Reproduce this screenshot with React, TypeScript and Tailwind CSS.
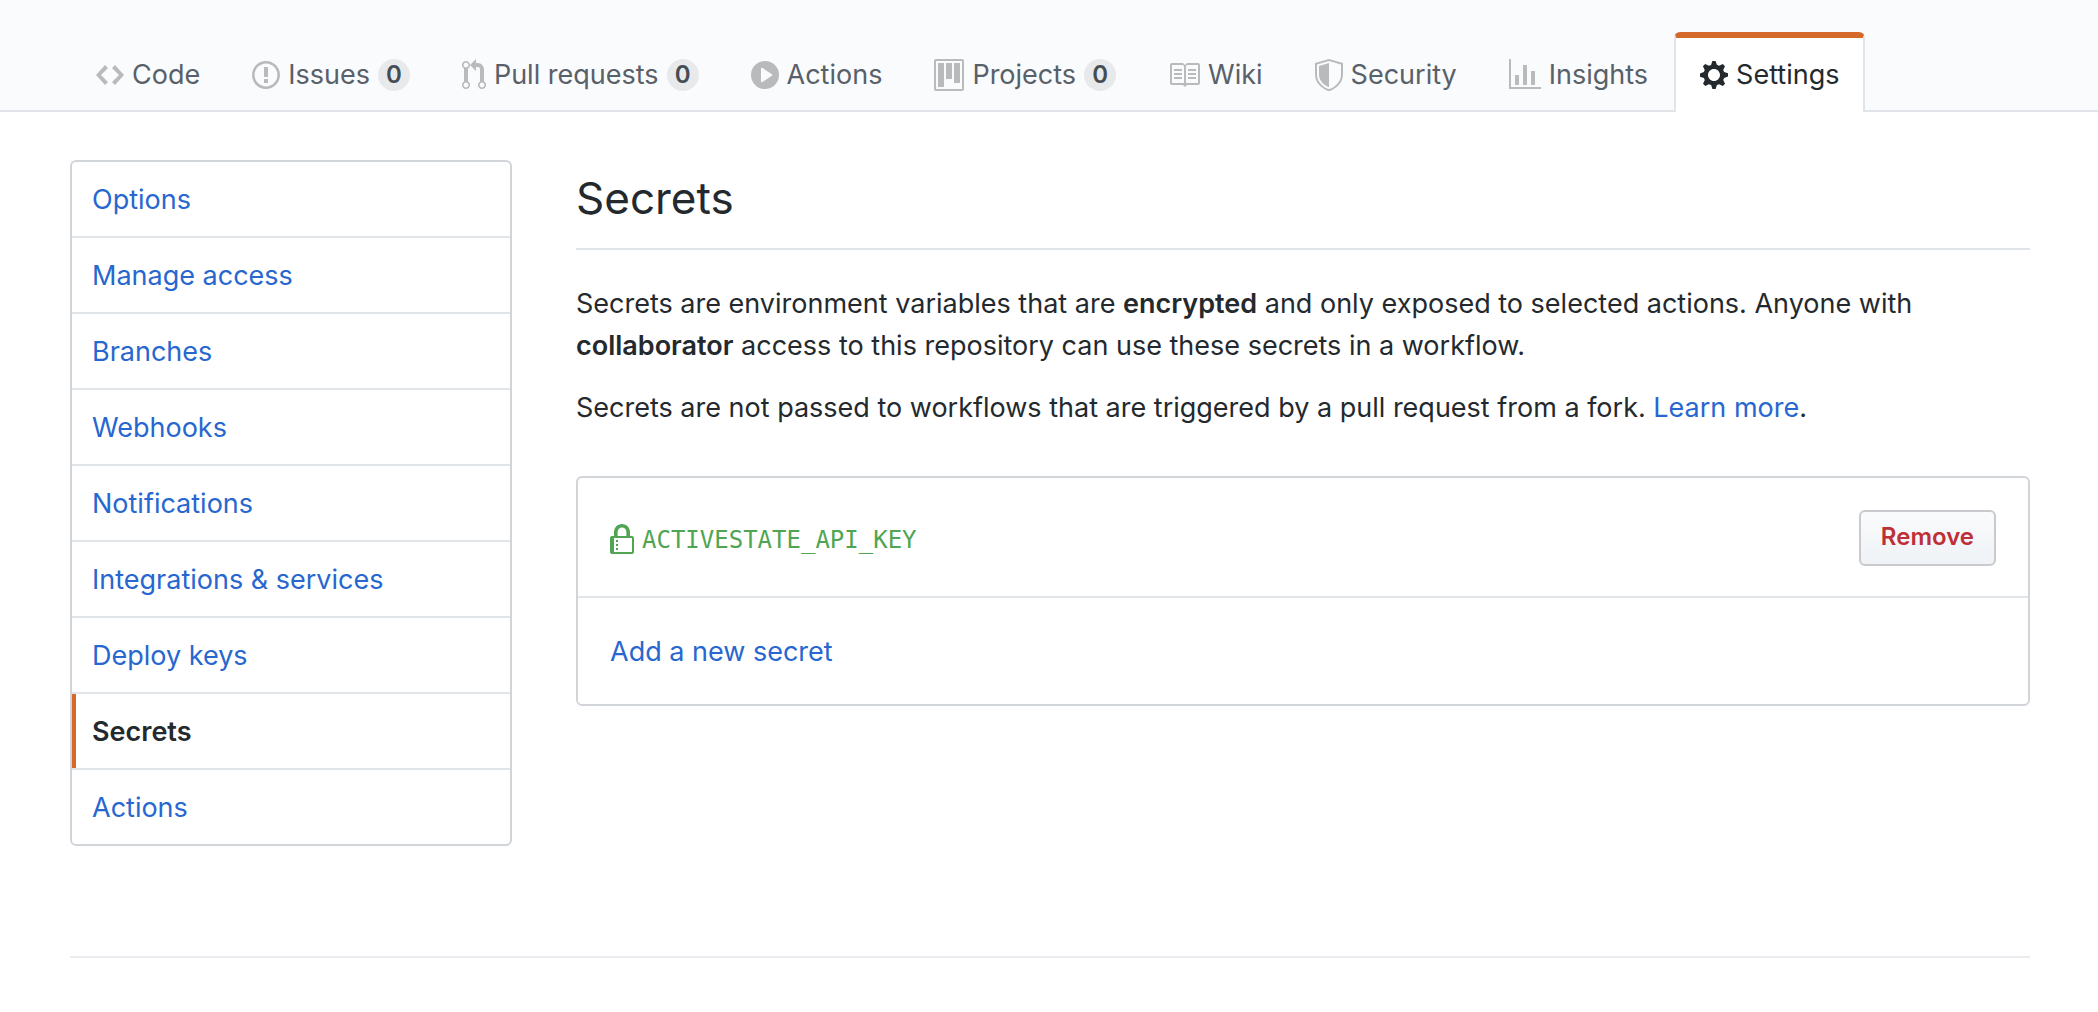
import React from 'react';

type IconShape = { width: number; path: string };

const icons: Record<string, IconShape> = {
  code: {
    width: 14,
    path: 'M9.5 3L8 4.5 11.5 8 8 11.5 9.5 13 14 8 9.5 3zm-5 0L0 8l4.5 5L6 11.5 2.5 8 6 4.5 4.5 3z',
  },
  issue: {
    width: 14,
    path: 'M7 2.3c3.14 0 5.7 2.56 5.7 5.7s-2.56 5.7-5.7 5.7A5.71 5.71 0 0 1 1.3 8c0-3.14 2.56-5.7 5.7-5.7zM7 1C3.14 1 0 4.14 0 8s3.14 7 7 7 7-3.14 7-7-3.14-7-7-7zm1 3H6v5h2V4zm0 6H6v2h2v-2z',
  },
  pull: {
    width: 12,
    path: 'M11 11.28V5c-.03-.78-.34-1.47-.94-2.06C9.46 2.35 8.78 2.03 8 2H7V0L4 3l3 3V4h1c.27.02.48.11.69.31.21.2.3.42.31.69v6.28A1.993 1.993 0 0 0 10 15a1.993 1.993 0 0 0 1-3.72zm-1 2.92c-.66 0-1.2-.55-1.2-1.2 0-.65.55-1.2 1.2-1.2.65 0 1.2.55 1.2 1.2 0 .65-.55 1.2-1.2 1.2zM4 3c0-1.11-.89-2-2-2a1.993 1.993 0 0 0-1 3.72v6.56A1.993 1.993 0 0 0 2 15a1.993 1.993 0 0 0 1-3.72V4.72c.59-.34 1-.98 1-1.72zm-.8 10c0 .66-.55 1.2-1.2 1.2-.65 0-1.2-.55-1.2-1.2 0-.65.55-1.2 1.2-1.2.65 0 1.2.55 1.2 1.2zM2 4.2C1.34 4.2.8 3.65.8 3c0-.65.55-1.2 1.2-1.2.65 0 1.2.55 1.2 1.2 0 .65-.55 1.2-1.2 1.2z',
  },
  play: {
    width: 14,
    path: 'M14 8A7 7 0 1 1 0 8a7 7 0 0 1 14 0zm-8.223 3.482l4.599-3.066a.5.5 0 0 0 0-.832L5.777 4.518A.5.5 0 0 0 5 4.934v6.132a.5.5 0 0 0 .777.416z',
  },
  project: {
    width: 15,
    path: 'M10 12h3V2h-3v10zm-4-2h3V2H6v8zm-4 4h3V2H2v12zm-1 1h13V1H1v14zM14 0H1a1 1 0 0 0-1 1v14a1 1 0 0 0 1 1h13a1 1 0 0 0 1-1V1a1 1 0 0 0-1-1z',
  },
  book: {
    width: 16,
    path: 'M3 5h4v1H3V5zm0 3h4V7H3v1zm0 2h4V9H3v1zm11-5h-4v1h4V5zm0 2h-4v1h4V7zm0 2h-4v1h4V9zm2-6v9c0 .55-.45 1-1 1H9.5l-1 1-1-1H2c-.55 0-1-.45-1-1V3c0-.55.45-1 1-1h5.5l1 1 1-1H15c.55 0 1 .45 1 1zm-8 .5L7.5 3H2v9h6V3.5zm7-.5H9.5l-.5.5V12h6V3z',
  },
  shield: {
    width: 14,
    path: 'M0 2l7-2 7 2v6.02C14 12.69 8.69 16 7 16c-1.69 0-7-3.31-7-7.98V2zm1 .75L7 1l6 1.75v5.268C13 12.104 8.449 15 7 15c-1.449 0-6-2.896-6-6.982V2.75zm1 .75L7 2v12c-1.207 0-5-2.482-5-5.985V3.5z',
  },
  graph: {
    width: 16,
    path: 'M16 14v1H0V0h1v14h15zM5 13H3V8h2v5zm4 0H7V3h2v10zm4 0h-2V6h2v7z',
  },
  gear: {
    width: 14,
    path: 'M14 8.77v-1.6l-1.94-.64-.45-1.09.88-1.84-1.13-1.13-1.81.91-1.09-.45-.69-1.92h-1.6l-.63 1.94-1.11.45-1.84-.88-1.13 1.13.91 1.81-.45 1.09L0 7.23v1.59l1.94.64.45 1.09-.88 1.84 1.13 1.13 1.81-.91 1.09.45.69 1.92h1.59l.63-1.94 1.11-.45 1.84.88 1.13-1.13-.92-1.81.47-1.09L14 8.75v.02zM7 11c-1.66 0-3-1.34-3-3s1.34-3 3-3 3 1.34 3 3-1.34 3-3 3z',
  },
  lock: {
    width: 12,
    path: 'M4 13H3v-1h1v1zm8-6v7c0 .55-.45 1-1 1H1c-.55 0-1-.45-1-1V7c0-.55.45-1 1-1h1V4c0-2.2 1.8-4 4-4s4 1.8 4 4v2h1c.55 0 1 .45 1 1zM3.8 6h4.41V4c0-1.22-.98-2.2-2.2-2.2-1.22 0-2.2.98-2.2 2.2v2H3.8zM11 7H2v7h9V7zM4 8H3v1h1V8zm0 2H3v1h1v-1z',
  },
};

function Icon({ name, className }: { name: string; className: string }) {
  const { width, path } = icons[name];
  return (
    <svg
      aria-hidden="true"
      viewBox={`0 0 ${width} 16`}
      width={width * 2}
      height={32}
      className={`shrink-0 fill-current ${className}`}
    >
      <path fillRule="evenodd" d={path} />
    </svg>
  );
}

type Tab = { label: string; icon: string; count?: number; active?: boolean };

const tabs: Tab[] = [
  { label: 'Code', icon: 'code' },
  { label: 'Issues', icon: 'issue', count: 0 },
  { label: 'Pull requests', icon: 'pull', count: 0 },
  { label: 'Actions', icon: 'play' },
  { label: 'Projects', icon: 'project', count: 0 },
  { label: 'Wiki', icon: 'book' },
  { label: 'Security', icon: 'shield' },
  { label: 'Insights', icon: 'graph' },
  { label: 'Settings', icon: 'gear', active: true },
];

const menu = [
  'Options',
  'Manage access',
  'Branches',
  'Webhooks',
  'Notifications',
  'Integrations & services',
  'Deploy keys',
  'Secrets',
  'Actions',
];

function RepoTab({ tab }: { tab: Tab }) {
  return (
    <a
      href="#"
      aria-current={tab.active ? 'page' : undefined}
      className={`-mb-0.5 flex h-20 items-center rounded-t-md border-x-2 border-t-6 px-6 pb-px whitespace-nowrap ${
        tab.active
          ? 'border-x-[#e1e4e8] border-t-[#d5682b] bg-white text-[#24292e]'
          : 'border-transparent text-[#586069]'
      }`}
    >
      <Icon name={tab.icon} className={tab.active ? 'mr-2' : 'mr-2 text-[#b9babb]'} />
      {tab.label}
      {tab.count !== undefined && (
        <span className="ml-2 flex size-8 items-center justify-center rounded-full bg-[#e8e9eb] text-2xl font-semibold text-[#444d56]">
          {tab.count}
        </span>
      )}
    </a>
  );
}

export default function App() {
  return (
    <div className="bg-white font-['Inter',sans-serif] text-[27px] leading-[42px] text-[#24292e]">
      <header className="border-b-2 border-[#e1e4e8] bg-[#fafbfc] pt-8 pr-[68px] pl-[70px]">
        <nav aria-label="Repository" className="flex">
          {tabs.map((tab) => (
            <RepoTab key={tab.label} tab={tab} />
          ))}
        </nav>
      </header>

      <div className="pt-12 pr-[68px] pl-[70px]">
        <div className="flex items-start gap-16">
          <nav
            aria-label="Settings"
            className="w-[442px] shrink-0 divide-y-2 divide-[#e1e4e8] overflow-hidden rounded-md border-2 border-[#d1d5da]"
          >
            {menu.map((item) => (
              <div key={item}>
                <a
                  href="#"
                  aria-current={item === 'Secrets' ? 'page' : undefined}
                  className={`block pt-[17px] pb-[15px] ${
                    item === 'Secrets'
                      ? 'border-l-4 border-[#d5682b] pl-4 font-semibold text-[#24292e]'
                      : 'pl-5 text-[#2767cf]'
                  }`}
                >
                  {item}
                </a>
              </div>
            ))}
          </nav>

          <main className="min-w-0 flex-1">
            <h1 className="border-b-2 border-[#e1e4e8] pt-1 pb-4 text-[44px] leading-[68px]">Secrets</h1>
            <p className="mt-[33px]">
              Secrets are environment variables that are <strong className="font-semibold">encrypted</strong> and only
              exposed to selected actions. Anyone with{' '}
              <strong className="font-semibold">collaborator</strong> access to this repository can use these secrets in
              a workflow.
            </p>
            <p className="mt-5">
              Secrets are not passed to workflows that are triggered by a pull request from a fork.{' '}
              <a href="#" className="text-[#2767cf]">
                Learn more
              </a>
              .
            </p>

            <section className="mt-[47px] divide-y-2 divide-[#e1e4e8] rounded-md border-2 border-[#d1d5da]">
              <div className="flex items-start justify-between px-8 pt-8 pb-[30px]">
                <div className="flex items-center pt-3.5 text-[#4fa551]">
                  <Icon name="lock" className="mr-2" />
                  <code className="font-['DejaVu_Sans_Mono',monospace] text-2xl">ACTIVESTATE_API_KEY</code>
                </div>
                <button
                  type="button"
                  className="rounded-md border-2 border-[#c8cacd] bg-linear-to-b from-[#fafbfc] to-[#eff3f6] px-5 pt-[7px] pb-[9px] text-2xl leading-9 font-semibold text-[#bf3036]"
                >
                  Remove
                </button>
              </div>
              <div className="px-8 pt-[33px] pb-[31px]">
                <a href="#" className="text-[#2767cf]">
                  Add a new secret
                </a>
              </div>
            </section>
          </main>
        </div>

        <footer className="mt-[110px] border-t-2 border-[#eaecef] pb-12" />
      </div>
    </div>
  );
}
